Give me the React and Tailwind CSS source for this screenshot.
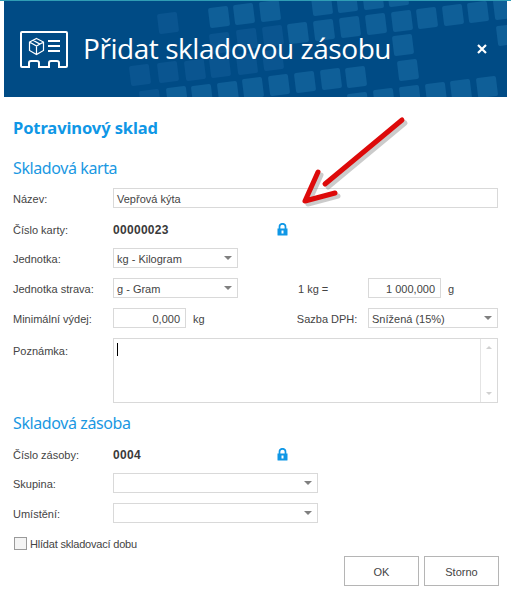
const squares = [
  // top edge
  [312, -5], [337, -8], [363, -11], [388, -14],
  [209, 7], [234, 4], [260, 1],
  // middle band
  [288, 23], [314, 20], [340, 17], [366, 14], [392, 11], [417, 8], [443, 5], [468, 2], [494, -1],
  [497, 25], [393, 35], [398, 60],
  // lower band
  [269, 75], [295, 72], [321, 69], [346, 67],
  [167, 87], [192, 85], [218, 82], [243, 78],
  [348, 93], [374, 89], [400, 86], [426, 83], [451, 80], [477, 77],
];

const faintSquares = [
  [158, 13], [237, 29], [263, 26], [210, 33], [130, 65], [158, 62], [185, 60], [210, 57], [237, 54], [263, 50], [140, 90],
];

function HeaderPattern() {
  return (
    <svg className="absolute inset-0" width="503" height="96" viewBox="4 1 503 96">
      {faintSquares.map(([x, y], i) => (
        <rect key={i} x={x} y={y} width="20" height="20" rx="2" fill="#0a5590" transform={`rotate(-7 ${x + 10} ${y + 10})`} />
      ))}
      {squares.map(([x, y], i) => (
        <rect key={i} x={x} y={y} width="20" height="20" rx="2" fill="#0f5f98" transform={`rotate(-7 ${x + 10} ${y + 10})`} />
      ))}
    </svg>
  );
}

function CardIcon() {
  return (
    <svg width="48" height="37" viewBox="0 0 48 37" fill="none" stroke="#fff" className="shrink-0">
      <path d="M2 1h44a1 1 0 0 1 1 1v33a1 1 0 0 1-1 1h-7v-4a2 2 0 0 0-2-2h-6a2 2 0 0 0-2 2v4H19v-4a2 2 0 0 0-2-2h-6a2 2 0 0 0-2 2v4H2a1 1 0 0 1-1-1V2a1 1 0 0 1 1-1z" strokeWidth="2" />
      <path d="M16.500 7.500l7 3.500v8.500l-7 4-7-4V11zM9.500 11l7 4 7-4M16.500 15v8.500M13 9.300l7 3.800" strokeWidth="1.200" />
      <path d="M28 10h12M28 15h12M28 20h12" strokeWidth="2" />
    </svg>
  );
}

function Lock() {
  return (
    <svg width="11" height="13" viewBox="0 0 11 13" className="shrink-0">
      <path d="M2.500 6V3.800a3 3 0 0 1 6 0V6" fill="none" stroke="#0f97e6" strokeWidth="1.700" />
      <path d="M0.500 5.500h10V12a.6.6 0 0 1-.6.6H1.100a.6.6 0 0 1-.6-.6z" fill="#0f97e6" />
      <rect x="4.500" y="7.500" width="2" height="3" fill="#fff" />
    </svg>
  );
}

function Label({ children, className = "w-[100px]" }) {
  return <div className={`shrink-0 pt-[3px] ${className}`}>{children}</div>;
}

function Select({ value, className }) {
  return (
    <div className={`h-5 border border-[#d9d9d9] bg-white flex items-center justify-between pl-[3px] pr-[5px] shrink-0 ${className}`}>
      <span className="pt-[2px]">{value}</span>
      <span className="w-0 h-0 border-x-[4px] border-x-transparent border-t-[4px] border-t-[#808080]" />
    </div>
  );
}

function NumberBox({ value, className }) {
  return (
    <div className={`h-5 border border-[#d9d9d9] bg-white flex items-center justify-end pr-[5px] pt-[2px] shrink-0 ${className}`}>
      {value}
    </div>
  );
}

export default function App() {
  return (
    <div className="w-[511px] h-[596px] bg-white overflow-hidden relative text-[#444444] text-[11px] font-['Liberation_Sans',sans-serif]">
      <div className="h-px bg-[#2f9db5]" />
      <div className="mx-1 h-24 bg-[#004b85] relative overflow-hidden flex items-center pl-4 pr-[20px]">
        <HeaderPattern />
        <div className="relative flex items-center w-full">
          <CardIcon />
          <h1 className="ml-[15px] text-[28px] tracking-[-0.45px] text-white font-['Open_Sans',sans-serif] leading-none -mt-[2px]">Přidat skladovou zásobu</h1>
          <svg width="10" height="10" viewBox="0 0 10 10" className="ml-auto" stroke="#fff" strokeWidth="2.200">
            <path d="M1 1l8 8M9 1l-8 8" />
          </svg>
        </div>
      </div>

      <div className="px-[13px] pt-[21px]">
        <h2 className="text-[16.500px] leading-[20px] font-bold text-[#0f97e6] font-['Noto_Sans',sans-serif] tracking-[-0.1px]">Potravinový sklad</h2>
        <h3 className="mt-[20px] text-[16px] leading-[20px] text-[#1a98e2] font-['Noto_Sans',sans-serif] tracking-[-0.4px]">Skladová karta</h3>

        <div className="mt-[10px] flex items-center h-5">
          <Label>Název:</Label>
          <div className="h-5 w-[385px] border border-[#d9d9d9] flex items-center pl-[3px] pt-[2px]">Vepřová kýta</div>
        </div>
        <div className="mt-[11px] flex items-center h-5">
          <Label>Číslo karty:</Label>
          <b className="w-[164px] text-[12px] tracking-[0.3px] text-[#3a3a3a] pt-px">00000023</b>
          <Lock />
        </div>
        <div className="mt-[9px] flex items-center h-5">
          <Label>Jednotka:</Label>
          <Select value="kg - Kilogram" className="w-[125px]" />
        </div>
        <div className="mt-[10px] flex items-center h-5">
          <Label>Jednotka strava:</Label>
          <Select value="g - Gram" className="w-[125px]" />
          <div className="ml-[60px] w-[70px] pt-[3px]">1 kg =</div>
          <NumberBox value="1 000,000" className="w-[73px]" />
          <span className="ml-[7px] pt-[3px]">g</span>
        </div>
        <div className="mt-[10px] flex items-center h-5">
          <Label>Minimální výdej:</Label>
          <NumberBox value="0,000" className="w-[73px]" />
          <span className="ml-[7px] w-[105px] pt-[3px]">kg</span>
          <div className="w-[71px] mr-px pt-[3px]">Sazba DPH:</div>
          <Select value="Snížená (15%)" className="w-[130px]" />
        </div>
        <div className="mt-[10px] flex">
          <Label className="w-[100px] pt-[5px]">Poznámka:</Label>
          <div className="h-[65px] w-[385px] border border-[#d9d9d9] flex">
            <div className="flex-1 pl-[3px] pt-[4px]">
              <div className="w-px h-[13px] bg-black" />
            </div>
            <div className="w-[17px] border-l border-[#e4e4e4] flex flex-col items-center justify-between py-[7px]">
              <span className="w-0 h-0 border-x-[3px] border-x-transparent border-b-[3px] border-b-[#d0d0d0]" />
              <span className="w-0 h-0 border-x-[3px] border-x-transparent border-t-[3px] border-t-[#d0d0d0]" />
            </div>
          </div>
        </div>

        <h3 className="mt-[10px] text-[16px] leading-[20px] text-[#1a98e2] font-['Noto_Sans',sans-serif] tracking-[-0.4px]">Skladová zásoba</h3>
        <div className="mt-[11px] flex items-center h-5">
          <Label>Číslo zásoby:</Label>
          <b className="w-[164px] text-[12px] tracking-[0.3px] text-[#3a3a3a] pt-px">0004</b>
          <Lock />
        </div>
        <div className="mt-[9px] flex items-center h-5">
          <Label>Skupina:</Label>
          <Select value="" className="w-[205px]" />
        </div>
        <div className="mt-[10px] flex items-center h-5">
          <Label>Umístění:</Label>
          <Select value="" className="w-[205px]" />
        </div>
        <div className="mt-[13px] flex items-center h-[14px] pl-px">
          <div className="w-[13px] h-[13px] border border-[#9a9a9a] bg-[#f4f4f4]" />
          <span className="ml-[3px] pt-[2px] tracking-[-0.2px]">Hlídat skladovací dobu</span>
        </div>
        <div className="mt-[6px] flex justify-end gap-[5px] -mr-px">
          <div className="w-[75px] h-[30px] border border-[#b5b5b5] flex items-center justify-center pt-[2px]">OK</div>
          <div className="w-[75px] h-[30px] border border-[#b5b5b5] flex items-center justify-center pt-[2px]">Storno</div>
        </div>
      </div>

      {/* red annotation arrow drawn over the form */}
      <svg className="absolute left-[295px] top-[110px]" width="120" height="105" viewBox="0 0 120 105" fill="none">
        <g stroke="#6b6b6b" strokeOpacity="0.35" strokeWidth="5" strokeLinecap="round" strokeLinejoin="round" transform="translate(3 3)">
          <path d="M107 10L30 74M23 62L10 91L40 83" />
        </g>
        <g stroke="#dd0a0a" strokeWidth="5" strokeLinecap="round" strokeLinejoin="round">
          <path d="M107 10L30 74M23 62L10 91L40 83" />
        </g>
      </svg>
    </div>
  );
}
